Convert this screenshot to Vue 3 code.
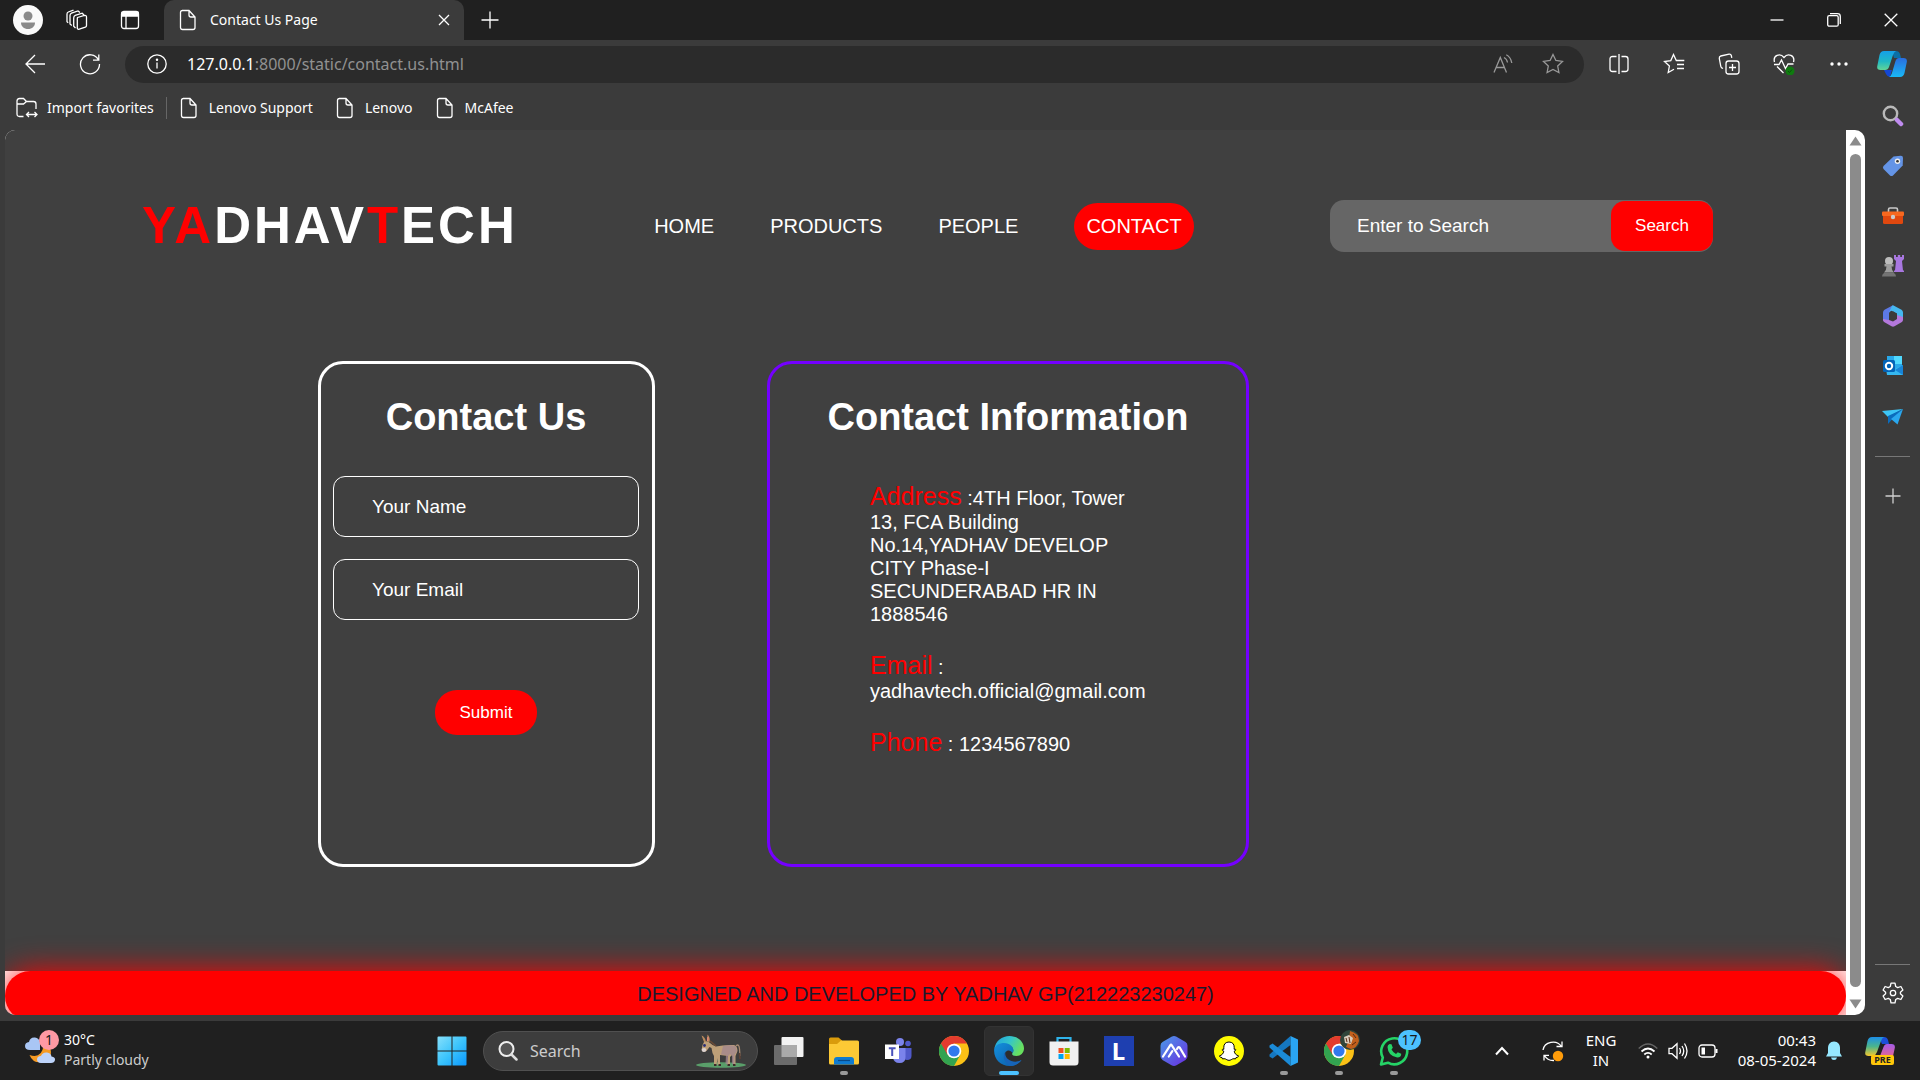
<script setup>
import { ref } from 'vue'

const name = ref('')
const email = ref('')
const query = ref('')
const taskQuery = ref('')

const bookmarks = ['Lenovo Support', 'Lenovo', 'McAfee']
const links = ['HOME', 'PRODUCTS', 'PEOPLE', 'CONTACT']
</script>

<template>
  <div class="desktop">
    <header class="tabstrip">
      <button class="profile" aria-label="Profile">
        <svg width="30" height="30" viewBox="0 0 30 30"><circle cx="15" cy="15" r="15" fill="#fafafa" /><circle cx="15" cy="11" r="4.5" fill="#8a8a8a" /><path d="M8 17.5h14c0 4-3 6.500-7 6.500s-7-2.500-7-6.500z" fill="#8a8a8a" /></svg>
      </button>
      <button class="icon tool" aria-label="Workspaces">
        <svg width="22" height="22" viewBox="0 0 22 22" class="line"><path d="M11.500 8.500l7-2q2-.4 2 1.500v8.500q0 1.200-1.200 1.700l-6 2q-2 .5-2-1.500v-8.500q0-1.200.2-1.700z" /><path d="M9.500 19l-1.800-1.800V9q0-2 1.500-2.600l7-2.200L18 6" /><path d="M5.800 16.500l-1.800-1.500V6.500q0-1.800 1.500-2.400l6.500-2.200 2 1.600M2.200 13.800l-1.200-1V5q0-1.500 1.300-2L7.500 1.200" /></svg>
      </button>
      <button class="icon tool" aria-label="Tab actions">
        <svg width="20" height="20" viewBox="0 0 20 20" class="line"><rect x="1.500" y="1.500" width="17" height="17" rx="2.500" /><path d="M2 2.500h16v3.500H2z" fill="#fff" /><path d="M6 6v12" /></svg>
      </button>
      <div class="tab">
        <svg width="18" height="22" viewBox="0 0 18 22" class="line"><path d="M3 1.500h7L16 8v10.500q0 2-2 2H3.500q-2 0-2-2V3.500q0-2 2-2zM10 1.500V6q0 2 2 2h4" /></svg>
        <span class="tab-title">Contact Us Page</span>
        <button class="icon" aria-label="Close tab"><svg width="12" height="12" viewBox="0 0 12 12" class="line"><path d="M1 1l10 10M11 1L1 11" /></svg></button>
      </div>
      <button class="icon newtab" aria-label="New tab"><svg width="18" height="18" viewBox="0 0 18 18" class="line"><path d="M9 .5v17M.5 9h17" /></svg></button>
      <div class="controls">
        <button class="icon" aria-label="Minimize"><svg width="14" height="14" viewBox="0 0 14 14" class="line"><path d="M.5 7h13" /></svg></button>
        <button class="icon" aria-label="Restore"><svg width="14" height="14" viewBox="0 0 14 14" class="line"><rect x=".7" y="2.700" width="10.500" height="10.500" rx="1.500" /><path d="M3 .7h7.500q2.800 0 2.800 2.800V11" /></svg></button>
        <button class="icon" aria-label="Close"><svg width="14" height="14" viewBox="0 0 14 14" class="line"><path d="M.7.7l12.600 12.600M13.300.7L.7 13.300" /></svg></button>
      </div>
    </header>

    <div class="toolbar">
      <button class="icon nav-btn" aria-label="Back"><svg width="20" height="20" viewBox="0 0 20 20" class="line"><path d="M20 10H1M10 1L1 10l9 9" /></svg></button>
      <button class="icon nav-btn" aria-label="Refresh"><svg width="22" height="22" viewBox="0 0 22 22" class="line"><path d="M19.500 7A9.500 9.500 0 1 0 20.500 11M19.800 1.500V7.200H14" /></svg></button>
      <div class="address">
        <svg width="20" height="20" viewBox="0 0 20 20" class="line"><circle cx="10" cy="10" r="9.200" /><path d="M10 8.500v6" /><circle cx="10" cy="5.800" r=".6" fill="#fff" /></svg>
        <a class="url" href="#">127.0.0.1<span>:8000/static/contact.us.html</span></a>
        <button class="icon addr-btn" aria-label="Read aloud"><svg width="20" height="20" viewBox="0 0 20 20" class="line dim"><path d="M1 18.500L7.300 3.500l6.200 15M3.200 13.500h8.200M11 3.500q3 1.500 3.500 5M13.300.8q4.500 2.400 5.500 8.200" /></svg></button>
        <button class="icon addr-btn" aria-label="Add to favorites"><svg width="22" height="22" viewBox="0 0 22 22" class="line dim"><path d="M11 1.500l2.900 6 6.600.9-4.800 4.600 1.200 6.500-5.900-3.100-5.900 3.100 1.200-6.500L1.500 8.400l6.600-.9z" /></svg></button>
      </div>
      <div class="actions">
        <button class="icon" aria-label="Split screen"><svg width="20" height="20" viewBox="0 0 20 20" class="line"><path d="M10 0v20M7.500 2.500H3.500q-2.500 0-2.500 2.500v10q0 2.500 2.500 2.500h4M12.500 2.500h4q2.500 0 2.500 2.500v10q0 2.500-2.500 2.500h-4" /></svg></button>
        <button class="icon" aria-label="Favorites"><svg width="22" height="22" viewBox="0 0 22 22" class="line"><path d="M11 16.300l-5.800 3.200 1.200-6.500L1.500 8.500l6.300-.9L10.500 1.500l2.800 6h8M14 11.500h7M14 15.500h7" /></svg></button>
        <button class="icon" aria-label="Collections"><svg width="22" height="22" viewBox="0 0 22 22" class="line"><rect x="8" y="8" width="13" height="13" rx="2.500" /><path d="M14.500 11v7M11 14.500h7M5 15.500l-1.200-.6q-.8-.5-1-1.500L1.300 5.500q-.3-2 1.500-2.500L11 1.200q1.800-.3 2.300 1.300l.5 2.300" /></svg></button>
        <button class="icon" aria-label="Browser essentials"><svg width="22" height="22" viewBox="0 0 22 22" class="line"><path d="M1.500 9C-.3 2.500 7-.5 11 4.500 15-.5 22.300 2.500 20.500 9M1 11.500h5l2.500-4.500 4 8.500 2.500-4.500h5.500M4 13.500l6.500 6.500" /><circle cx="17" cy="18" r="4.500" fill="#0f7b0f" stroke="none" /><path d="M15 18l1.500 1.500L19 16.500" stroke="#0a500a" stroke-width="1" /></svg></button>
        <button class="icon" aria-label="Settings and more"><svg width="18" height="6" viewBox="0 0 18 6" fill="#fff"><circle cx="2" cy="3" r="1.700" /><circle cx="9" cy="3" r="1.700" /><circle cx="16" cy="3" r="1.700" /></svg></button>
      </div>
      <button class="icon copilot" aria-label="Copilot">
        <svg width="30" height="28" viewBox="0 0 30 28">
          <defs>
            <linearGradient id="cpa" x1="0" y1="0" x2="0" y2="1"><stop offset="0" stop-color="#159fe8" /><stop offset=".55" stop-color="#20b8c4" /><stop offset="1" stop-color="#62d596" /></linearGradient>
            <linearGradient id="cpb" x1="0" y1="0" x2="0" y2="1"><stop offset="0" stop-color="#2a6ddf" /><stop offset="1" stop-color="#19b9f7" /></linearGradient>
          </defs>
          <path d="M15 1h4q3 0 4 3l1 4h-7z" fill="#0b6fa5" />
          <path d="M7 20h8l-2 7q-3-.5-4-3z" fill="#1447d4" />
          <path d="M7 1h12q-2 1-3 4l-4 12q-1 3-4 3H3.500Q-.5 20 .3 16L2.500 5q1-4 4.500-4z" fill="url(#cpa)" />
          <path d="M22 8h4.500q4 0 3.300 4L27.500 23q-1 4-4.500 4H12q2-1 2.800-3.500L18.500 11q1-3 3.500-3z" fill="url(#cpb)" />
        </svg>
      </button>
    </div>

    <nav class="bookmarks" aria-label="Favorites bar">
      <a href="#" class="import">
        <svg width="22" height="22" viewBox="0 0 22 22" class="line"><path d="M7.500 19.500H3.500q-2.500 0-2.500-2.500V4q0-2.500 2.500-2.500h4l3 3h7q2.500 0 2.500 2.500v5M1 7h6.500l3-2.500M11 17.500h9.500M13 15l-2.500 2.500L13 20M18.500 15l2.500 2.500-2.500 2.500" /></svg>
        Import favorites
      </a>
      <a v-for="b in bookmarks" :key="b" href="#">
        <svg width="18" height="22" viewBox="0 0 18 22" class="line"><path d="M3 1.500h7L16 8v10.500q0 2-2 2H3.500q-2 0-2-2V3.500q0-2 2-2zM10 1.500V6q0 2 2 2h4" /></svg>
        {{ b }}
      </a>
    </nav>

    <div class="browser">
      <div class="page">
        <div class="site">
          <header class="site-head">
            <div class="logo"><span>YA</span>DHAV<span>T</span>ECH</div>
            <nav class="menu">
              <a v-for="l in links" :key="l" href="#" :class="{ active: l === 'CONTACT' }">{{ l }}</a>
            </nav>
            <form class="search" @submit.prevent>
              <input v-model="query" type="text" placeholder="Enter to Search" aria-label="Enter to Search" />
              <button>Search</button>
            </form>
          </header>
          <main class="cards">
            <form class="card contact" @submit.prevent>
              <h1>Contact Us</h1>
              <input v-model="name" type="text" placeholder="Your Name" aria-label="Your Name" />
              <input v-model="email" type="email" placeholder="Your Email" aria-label="Your Email" />
              <button>Submit</button>
            </form>
            <section class="card info">
              <h1>Contact Information</h1>
              <div class="details">
                <p><span>Address</span> :4TH Floor, Tower 13, FCA Building No.14,YADHAV DEVELOP CITY Phase-I SECUNDERABAD HR IN 1888546</p>
                <p><span>Email</span> : yadhavtech.official@gmail.com</p>
                <p><span>Phone</span> : 1234567890</p>
              </div>
            </section>
          </main>
        </div>
        <footer class="site-foot">DESIGNED AND DEVELOPED BY YADHAV GP(212223230247)</footer>
      </div>
      <div class="scrollbar">
        <svg width="13" height="10" viewBox="0 0 13 10"><path d="M6.500 0.500L12.500 9.500H.5z" fill="#8b8b8b" /></svg>
        <div class="thumb"></div>
        <svg width="13" height="10" viewBox="0 0 13 10"><path d="M6.500 9.500L.5.5h12z" fill="#8b8b8b" /></svg>
      </div>
    </div>

    <aside class="sidebar">
      <button class="icon" aria-label="Search"><svg width="22" height="22" viewBox="0 0 22 22"><circle cx="8.500" cy="8.500" r="6.700" fill="none" stroke="#b9b9b9" stroke-width="2.400" /><path d="M15 15l4 4" stroke="#c08cf0" stroke-width="4.500" stroke-linecap="round" /></svg></button>
      <button class="icon" aria-label="Shopping"><svg width="22" height="22" viewBox="0 0 22 22"><path d="M11.500 1.500L18.500.8q2.500-.2 2.500 2.200l-.3 7.500L11 20.500q-1.500 1.200-3 0l-6.500-6.500q-1.200-1.500 0-3z" fill="#6494e6" /><circle cx="15.500" cy="6.300" r="2.700" fill="#eee" /><circle cx="15.500" cy="6.300" r="1.300" fill="#333" /></svg></button>
      <button class="icon" aria-label="Tools"><svg width="22" height="22" viewBox="0 0 22 22"><path d="M6.500 7V4.500q0-1.500 1.500-1.500h6q1.500 0 1.500 1.500V7" fill="none" stroke="#c9c9c9" stroke-width="1.600" /><rect x="1" y="9" width="20" height="10" rx="1.500" fill="#e0480f" /><rect x="0" y="6.500" width="22" height="4.500" rx="1" fill="#f7681f" /><circle cx="11" cy="12" r="2.200" fill="#ccc" /></svg></button>
      <button class="icon" aria-label="Games"><svg width="22" height="22" viewBox="0 0 22 22"><path d="M12 0h2v2h1.800V0h2.400v2H20V0h2v4l-2 2 1 9.500h1V17H12v-1.500h1L14 6l-2-2z" fill="#a877e0" /><circle cx="7" cy="6" r="4" fill="#bdbdbd" /><path d="M2.500 9h9v2.500H9.500Q9.500 15 12 17.500H2Q4.500 15 4.500 11.500h-2z" fill="#9d9d9d" /><path d="M2 18h10q2 1 2 3.500H0Q0 19 2 18z" fill="#747474" /></svg></button>
      <button class="icon" aria-label="Microsoft 365">
        <svg width="22" height="22" viewBox="0 0 22 22">
          <path d="M11 .3L2.500 4.800Q1 5.700 1 7.500v8l6 2.500V8.500q0-1.500 1.500-2.300L14 3z" fill="#5c79e6" />
          <path d="M10 .8q1-.6 2 0l7.500 4Q21 5.700 21 7.500V14l-6-3.500V8.800L9 5.500 7 7.500Z" fill="#45b8f0" />
          <path d="M21 12v3q0 1.500-1.500 2.300l-7 4q-1.500.8-3 0L2.500 17.300Q1 16.500 1 15v-1l6 1 4 1.500 4-2.500v-4z" fill="#b478dc" />
          <path d="M7 8.500l4-2.300 4 2.300v4.700l-4 2.500-4-2.500z" fill="#3b3b3b" />
        </svg>
      </button>
      <button class="icon" aria-label="Outlook"><svg width="22" height="22" viewBox="0 0 22 22"><path d="M5 1h15v19H5z" fill="#28a8ea" /><path d="M12 1h8v8h-8z" fill="#50d9ff" /><path d="M4 14l9 0 8-4v10H5z" fill="#35b8f1" /><path d="M13 15l8-5v10z" fill="#1784d8" /><rect x="1" y="5" width="12" height="12" rx="1.500" fill="#0364b8" /><circle cx="7" cy="11" r="3.200" fill="none" stroke="#fff" stroke-width="2" /></svg></button>
      <button class="icon" aria-label="Drop"><svg width="22" height="22" viewBox="0 0 22 22"><path d="M0 6L21 4 6 12z" fill="#3dc5f5" /><path d="M21 4L6 11v8l4-4.500z" fill="#0b6cbd" /><path d="M21 4L9 14l6.500 5.500z" fill="#2aa7ee" /></svg></button>
      <hr />
      <button class="icon plus" aria-label="Customize"><svg width="16" height="16" viewBox="0 0 16 16" class="line"><path d="M8 .5v15M.5 8h15" stroke="#d0d0d0" /></svg></button>
      <hr class="push" />
      <button class="icon gear" aria-label="Settings"><svg width="22" height="22" viewBox="0 0 22 22" class="line"><path d="M9 1.200h4l.7 3.300 2 1.100 3.200-1.100 2 3.500-2.500 2.200v1.600l2.500 2.200-2 3.500-3.200-1.100-2 1.100-.7 3.300H9l-.7-3.300-2-1.100-3.200 1.100-2-3.500 2.500-2.200v-1.600L1.100 8l2-3.500 3.200 1.100 2-1.100z" stroke-linejoin="round" /><circle cx="11" cy="11" r="2.700" /></svg></button>
    </aside>

    <footer class="taskbar">
      <div class="weather">
        <svg width="32" height="36" viewBox="0 0 32 36">
          <path d="M24 13q6 13-6 17-10 2-13.500-7 12 4 14-9z" fill="#f59a23" />
          <path d="M5 18q-5 0-5-4 0-3.500 4-4Q5 5 10 5.500q4 .5 5 4.500V18z" fill="#a9c6f5" />
          <path d="M16 31q-4-.3-4-3.500t4-3.500q1.500-4 6-3.500 4 .5 4.500 4 4 .5 3.500 3.500-.5 3-4 3z" fill="#bdd3fa" />
        </svg>
        <span class="badge pink">1</span>
        <div><b>30°C</b><span>Partly cloudy</span></div>
      </div>
      <div class="apps">
        <button class="icon app" aria-label="Start"><svg width="30" height="30" viewBox="0 0 30 30"><defs><linearGradient id="win" x1="0" y1="0" x2="1" y2="1"><stop offset="0" stop-color="#86e0fb" /><stop offset=".5" stop-color="#3cc4fc" /><stop offset="1" stop-color="#0a98ff" /></linearGradient></defs><path d="M.5 1.500q0-1 1-1h13v14H.5zM15.500.5h13q1 0 1 1v13h-14zM.5 15.500h14v14h-13q-1 0-1-1zM15.500 15.500h14v13q0 1-1 1h-13z" fill="url(#win)" /></svg></button>
        <label class="task-search">
          <svg width="20" height="22" viewBox="0 0 20 22"><circle cx="8.500" cy="9" r="7" fill="#555" stroke="#eee" stroke-width="2" /><path d="M13.500 14.500l5 5" stroke="#ddd" stroke-width="2.500" stroke-linecap="round" /></svg>
          <input v-model="taskQuery" type="text" placeholder="Search" aria-label="Search" />
          <svg width="50" height="34" viewBox="0 0 50 34">
            <ellipse cx="25" cy="31" rx="25" ry="2.800" fill="#5a9e6a" />
            <path d="M8 8q3-2 6 1 3 3 6 3.500 8-2 18-1.500 3.500 1 3.500 6l-2 5v9h-2.500v-8l-1-2-2 2v8h-3l1-9-8-1v10h-2.500v-7l-1 7H18v-9q-2-3-2.500-8l-2-1-3 4-3 1-2-2 1-5z" fill="#bd9f78" />
            <path d="M27 12q7-1.500 12.500 0l1.500 5-2.500 4v9h-2.500v-8l-2-2-2 2v8h-2.500l.5-9-5-.5z" fill="#a2868f" opacity=".75" />
            <path d="M8 8L5.500 1.500Q9 2.500 10 8zM11 7.500L11.500.5q3 3 2 7.500z" fill="#b98b5e" /><path d="M11.500 7l.5-4" stroke="#e8897c" stroke-width="1.200" />
            <path d="M14 7l6 5" stroke="#6b4b35" stroke-width="1.600" />
            <path d="M40 12q3-3 3.500 3l.5 7" stroke="#a68a72" stroke-width="1.300" fill="none" /><path d="M43.500 19l.5 6" stroke="#5a4136" stroke-width="1.800" />
            <circle cx="8.500" cy="11.500" r="1.400" fill="#2b3078" /><ellipse cx="8" cy="16" rx="2.300" ry="2" fill="#dcd2d0" />
            <path d="M18 31h2.500M22.500 31H25M31.500 31H34M37 31h2.500" stroke="#3c2a2a" stroke-width="2" />
          </svg>
        </label>
        <button class="icon app" aria-label="Task view"><svg width="30" height="30" viewBox="0 0 30 30"><rect x="7.500" y="1" width="22" height="20" rx="1" fill="#f2f2f2" /><rect x="0" y="9" width="23" height="20" rx="1" fill="#6b6b6b" /><path d="M7.500 9H23v12H7.500z" fill="#aaa" /></svg></button>
        <button class="icon app run" aria-label="File Explorer"><svg width="30" height="28" viewBox="0 0 30 28"><path d="M0 2q0-1.500 1.500-1.500h8L13 3.500V8H0z" fill="#d99b0b" /><path d="M0 7h8l4-3.500h16.500Q30 3.500 30 5v21q0 1.500-1.500 1.500h-27Q0 27.500 0 26z" fill="#fcc935" /><path d="M5 27.500V23q0-3 3-3h14q3 0 3 3v4.500z" fill="#0f7bd0" /><path d="M9 23.500h12" stroke="#084a88" stroke-width="1.200" /></svg></button>
        <button class="icon app" aria-label="Teams"><svg width="28" height="28" viewBox="0 0 28 28"><circle cx="15" cy="5" r="4" fill="#7b83eb" /><circle cx="23" cy="6.500" r="2.800" fill="#5059c9" /><path d="M18 11h8.500v8q0 4-4.500 4-3 0-4-2z" fill="#5059c9" /><path d="M8 11h12.500v9q0 6-6 6T8 20z" fill="#7b83eb" /><rect x="0" y="7.500" width="14" height="14.500" fill="#fff" /><path d="M3.800 11.300h6.800M7.200 11v8" stroke="#4b53bc" stroke-width="2" /></svg></button>
        <button class="icon app" aria-label="Chrome">
          <svg width="30" height="30" viewBox="0 0 30 30"><g id="chrome"><circle cx="15" cy="15" r="15" fill="#fbc116" /><path d="M15 15L2 7.500A15 15 0 0 0 15 30l6.500-11.500z" fill="#32a350" /><path d="M2 7.500A15 15 0 0 1 28 7.500H15L8.500 18.800z" fill="#e33b2e" /><circle cx="15" cy="15" r="7.300" fill="#fff" /><circle cx="15" cy="15" r="5.600" fill="#3079ee" /></g></svg>
        </button>
        <button class="icon app current" aria-label="Edge">
          <svg width="30" height="30" viewBox="0 0 30 30">
            <defs><linearGradient id="ea" x1="0" y1="0" x2="1" y2=".4"><stop offset="0" stop-color="#1e9fe0" /><stop offset=".55" stop-color="#35c6c9" /><stop offset="1" stop-color="#68e05f" /></linearGradient><linearGradient id="eb" x1="0" y1="0" x2="1" y2="1"><stop offset="0" stop-color="#1490dd" /><stop offset="1" stop-color="#0c59a4" /></linearGradient></defs>
            <path d="M.3 13C1.500 5 8 0 15.500 0 24 0 30 6 30 12.500 30 17 26.500 20 22.500 20c-4 0-5-1.500-4-3 2-3 0-7.500-5-7.500C7 9.500 1 11 .3 13z" fill="url(#ea)" />
            <path d="M.2 13C1.500 9 5.500 7 10 7c6 0 9.500 4 9.500 7.500 0 1.200-.4 2-1 2.500-1.500-3-5-3.500-7-1-3 4 1 10.500 8 10.500 3 0 5.500-1 8-2.500C25 27.500 20.500 30 15.500 30 6.500 30-.8 22.500.2 13z" fill="url(#eb)" />
            <path d="M11.500 16c-4 5-.5 11.500 5 13.900 4.500 0 8.500-2.400 11-5.900-8 4.500-18-1-16-8z" fill="#1664b8" />
          </svg>
        </button>
        <button class="icon app" aria-label="Microsoft Store"><svg width="30" height="30" viewBox="0 0 30 30"><path d="M8.500 6V2h13v4" fill="none" stroke="#2fb3ea" stroke-width="2.200" /><path d="M.5 5.500h29V26q0 3.500-3.500 3.500H4Q.5 29.500.5 26z" fill="#f1f1f1" /><path d="M9.500 12h5v5h-5z" fill="#f25022" /><path d="M15.700 12h5v5h-5z" fill="#7fba00" /><path d="M9.500 18h5v5h-5z" fill="#00a4ef" /><path d="M15.700 18h5v5h-5z" fill="#ffb900" /></svg></button>
        <button class="icon app" aria-label="Lenovo Vantage"><span class="lapp">L</span></button>
        <button class="icon app" aria-label="MSI"><svg width="30" height="30" viewBox="0 0 30 30"><defs><linearGradient id="ma" x1="0" y1="0" x2="1" y2="1"><stop offset="0" stop-color="#4a9be8" /><stop offset="1" stop-color="#6a2be0" /></linearGradient></defs><path d="M12.500.7q2.500-1.200 5 0l9 5.300q2 1.200 2 3.700v10.600q0 2.500-2 3.700l-9 5.300q-2.500 1.200-5 0l-9-5.300q-2-1.200-2-3.700V9.700q0-2.500 2-3.700z" fill="url(#ma)" /><path d="M4 20.500L11.200 9.300q.8-1.200 1.600 0L20 20.500M9.800 20.500l3.500-5.300M18 13l1-1.500q.8-1 1.600 0L26 20.500" fill="none" stroke="#fff" stroke-width="2.200" stroke-linecap="round" /></svg></button>
        <button class="icon app" aria-label="Snapchat"><svg width="30" height="30" viewBox="0 0 30 30"><circle cx="15" cy="15" r="15" fill="#fffc00" /><path d="M15 6c3.500 0 5.300 2.300 5.200 5.300v2q1.500-.5 1.600.5 0 .8-1.600 1.400c.5 2.500 2 4 4.300 4.600.2 1.200-1.300 1.500-2.500 1.800l-.5 1.300c-2.500-.6-3.500.3-4.500 1q-2 1-4 0c-1-.7-2-1.600-4.500-1L8 21.600c-1.200-.3-2.700-.6-2.500-1.800 2.300-.6 3.800-2.100 4.300-4.600-1.600-.6-1.700-1-1.600-1.400q.2-1 1.600-.5v-2C9.700 8.300 11.500 6 15 6z" fill="#fff" stroke="#000" stroke-width="1" /></svg></button>
        <button class="icon app run" aria-label="Visual Studio Code"><svg width="30" height="30" viewBox="0 0 30 30"><path d="M21.500 0v9L3.500 22.500.5 20.500v-2z" fill="#1577c0" /><path d="M21.500 30v-9L3.500 7.500l-3 2v2z" fill="#1b8bd8" /><path d="M21.500 0L29 3.500v23L21.500 30z" fill="#2aa5f3" /></svg></button>
        <button class="icon app run" aria-label="Chrome profile">
          <svg width="30" height="30" viewBox="0 0 30 30"><use href="#chrome" /></svg>
          <svg class="avatar" width="20" height="20" viewBox="0 0 20 20"><circle cx="10" cy="10" r="10" fill="#30453a" /><path d="M10 1q9 2 9 10-2 7-8 8l-5-2 3-7z" fill="#c2601c" /><path d="M4 7l5-2 4 3-2 6-6-1z" fill="#d9cdbd" /><path d="M6 8l1 4M9 7l1 6M13 4l3 4M12 15l4-3" stroke="#5a2a12" /></svg>
        </button>
        <button class="icon app run" aria-label="WhatsApp">
          <svg width="30" height="30" viewBox="0 0 30 30"><path d="M2 28.500l1.800-7A13 13 0 1 1 9 26.700z" fill="none" stroke="#25d366" stroke-width="2.600" stroke-linejoin="round" /><path d="M10.500 8l2 .3 1.300 3.500-1.300 1.800q1.500 3 4.500 4.300l1.800-1.700 3.400 1.600q.3 3.700-4 3.700Q9 20 8.500 11q0-2 2-3z" fill="#25d366" /></svg>
          <span class="badge blue">17</span>
        </button>
      </div>
      <div class="tray">
        <svg width="16" height="10" viewBox="0 0 16 10" class="line"><path d="M2 8.500l6-6.500 6 6.500" stroke-width="2" /></svg>
        <svg width="22" height="22" viewBox="0 0 22 22" class="line"><path d="M1 10A10 9 0 0 1 19.500 6.500M20 1.500V6.500h-5.500M12 20.500A10 9 0 0 1 2.500 15.500M2 20.500V15.300h5" /><circle cx="16" cy="16" r="5.200" fill="#ff9c0a" stroke="none" /></svg>
        <div class="lang"><span>ENG</span><span>IN</span></div>
        <div class="status">
          <svg width="20" height="16" viewBox="0 0 20 16" class="line"><path d="M.7 5.500Q10-3.500 19.300 5.500" stroke="#666" /><path d="M3.500 8.500q6.500-6 13 0M6.300 11.500q3.700-3.300 7.400 0" stroke-width="1.800" /><circle cx="10" cy="14" r="1.500" fill="#fff" stroke="none" /></svg>
          <svg width="20" height="18" viewBox="0 0 20 18" class="line"><path d="M1 6.300h3L9 1.800v14.400l-5-4.500H1zM11.500 6q2 3 0 6M14 4q3.500 5 0 10M16.500 1.500q5 7.500 0 15" /></svg>
          <svg width="20" height="14" viewBox="0 0 20 14" class="line"><rect x="1" y="1" width="16" height="12" rx="3" /><path d="M18.500 5v4" stroke-width="2" /><path d="M3.500 3.500H7v7H3.500z" fill="#fff" stroke="none" /></svg>
        </div>
        <div class="clock"><span>00:43</span><span>08-05-2024</span></div>
        <svg width="16" height="20" viewBox="0 0 16 20" fill="#96e8ff"><path d="M8 .5c4 0 6 3 6 6.500V12l2 3.500H0L2 12V7C2 3.500 4 .5 8 .5zM5 16.500h6q-.5 2.500-3 2.500t-3-2.500z" /></svg>
        <div class="pre">
          <svg width="30" height="28" viewBox="0 0 30 28">
            <defs>
              <linearGradient id="pa" x1="0" y1="0" x2="0" y2="1"><stop offset="0" stop-color="#1d8fe8" /><stop offset=".5" stop-color="#4bb58c" /><stop offset="1" stop-color="#f5c72c" /></linearGradient>
              <linearGradient id="pb" x1="0" y1="0" x2="0" y2="1"><stop offset="0" stop-color="#a45be8" /><stop offset="1" stop-color="#f2667e" /></linearGradient>
            </defs>
            <path d="M14 0h5q3 0 4 3l1 4h-7z" fill="#1c4fd8" />
            <path d="M7 0h12q-2 1-3 4l-4 11q-1 3-4 4H3.500Q-.5 19 .3 15L2.500 4q1-4 4.500-4z" fill="url(#pa)" />
            <path d="M22 7h4.500q4 0 3.300 4l-2 9q-1 3-4.500 3H12q2-1 2.800-3.500L18.500 10q1-3 3.500-3z" fill="url(#pb)" />
          </svg>
          <span>PRE</span>
        </div>
      </div>
    </footer>
  </div>
</template>

<style>
body { margin: 0; background: #202020; }
</style>

<style scoped>
* { box-sizing: border-box; }
.desktop {
  display: grid;
  grid-template-columns: 1fr 55px;
  grid-template-rows: 40px 48px 42px 1fr 59px;
  min-height: 100vh;
  background: #3b3b3b;
  color: #fff;
  font-family: "Noto Sans", "Open Sans", sans-serif;
  font-size: 14px;
}
button { border: 0; padding: 0; background: none; color: inherit; font-family: inherit; }
a { color: inherit; text-decoration: none; }
svg { display: block; flex: none; }
.icon { display: flex; align-items: center; justify-content: center; flex: none; }
.line { fill: none; stroke: #fff; stroke-width: 1.3; }
.dim { stroke: #999; }

.tabstrip { grid-column: 1 / -1; display: flex; align-items: center; padding-right: 1px; background: #202020; }
.profile { margin-left: 13px; margin-right: 7px; }
.tool { width: 53px; }
.tab {
  display: flex; align-items: center; gap: 13px;
  width: 300px; height: 40px; margin-left: 8px; padding: 0 14px 0 15px;
  border-radius: 10px 10px 0 0; background: #3b3b3b;
}
.tab-title { flex: 1; padding-bottom: 2px; }
.newtab { width: 52px; }
.controls { display: flex; margin-left: auto; }
.controls .icon { width: 57px; }

.toolbar { grid-column: 1 / -1; display: flex; align-items: center; padding: 0 2px 0 7px; }
.nav-btn { width: 55px; }
.address {
  flex: 1; display: flex; align-items: center;
  height: 37px; margin: 0 7px 0 8px; padding: 0 6px 0 22px;
  border-radius: 19px; background: #2b2b2b;
}
.url { flex: 1; margin-left: 20px; font-size: 16px; }
.url span { color: #919191; }
.addr-btn { width: 50px; }
.actions { display: flex; }
.actions .icon { width: 55px; }
.copilot { width: 52px; }

.bookmarks { grid-column: 1 / -1; display: flex; align-items: center; gap: 23px; padding: 0 16px 3px; }
.bookmarks a { display: flex; align-items: center; gap: 11px; }
.bookmarks .import { gap: 9px; padding-right: 12px; margin-right: -10px; border-right: 1px solid #666; }

.browser {
  display: flex; margin: 0 0 6px 5px;
  border-radius: 10px; overflow: hidden;
}
.page {
  flex: 1; display: flex; flex-direction: column; overflow: hidden;
  background: #fff; font-family: "Liberation Sans", Arial, sans-serif; font-size: 20px;
}
.site { flex: 1; padding: 70px 133px 100px 137px; background: #404040; }
.site-head { display: flex; align-items: center; justify-content: space-between; }
.logo { font-size: 51px; line-height: 52px; font-weight: 700; letter-spacing: 3px; }
.logo span { color: #f00; }
.menu { display: flex; align-items: center; gap: 56px; }
.menu .active { padding: 12px; border-radius: 24px; background: #f00; }
.search { display: flex; width: 383px; height: 52px; border-radius: 14px; background: #666; }
input { border: 0; outline: 0; background: none; color: #fff; font-family: inherit; }
input::placeholder { color: #fff; opacity: 1; }
.search input { flex: 1; min-width: 0; padding: 0 27px; font-size: 19px; }
.search button { width: 102px; margin: 1px 0; border-radius: 14px; background: #f00; font-size: 17px; }

.cards { display: flex; gap: 112px; margin-top: 109px; padding-left: 176px; }
.card { min-height: 506px; border: 3px solid #fff; border-radius: 25px; }
.card h1 { margin: 32px 0 0; font-size: 38px; line-height: 42px; text-align: center; }
.contact { display: flex; flex-direction: column; width: 337px; padding: 0 13px 0 12px; }
.contact input { height: 61px; margin-top: 22px; padding: 0 38px; border: 1px solid #fff; border-radius: 12px; font-size: 19px; }
.contact h1 + input { margin-top: 38px; }
.contact button { align-self: center; width: 102px; height: 45px; margin-top: 70px; border-radius: 22px; background: #f00; font-size: 17px; }
.info { width: 482px; border-color: #7400ff; }
.details { width: 284px; margin: 44px 0 0 100px; line-height: 23px; }
.details p { margin: 0 0 25px; }
.details span { color: #f00; font-size: 25px; line-height: 29px; }
.site-foot {
  position: relative; height: 50px; margin-bottom: -6px;
  border-radius: 25px; background: #f00; box-shadow: 0 0 30px #f00;
  color: #1a1a2e; line-height: 46px; text-align: center;
}

.scrollbar {
  display: flex; flex-direction: column; align-items: center; gap: 8px;
  width: 19px; padding: 6px 0; background: #fff;
}
.thumb { flex: 1; width: 11px; margin-bottom: 4px; border-radius: 6px; background: #8b8b8b; }

.sidebar { display: flex; flex-direction: column; align-items: center; margin-top: -39px; }
.sidebar .icon { width: 55px; height: 50px; }
.sidebar hr { width: 35px; margin: 15px 0; border: 0; border-top: 1px solid #777; }
.sidebar .plus { height: 48px; }
.sidebar .push { margin: auto 0 0; }
.sidebar .gear { height: 56px; }

.taskbar {
  grid-column: 1 / -1; display: grid; grid-template-columns: 424px 1fr auto; align-items: center;
  background: #202020;
}
.weather { position: relative; display: flex; align-items: center; gap: 7px; padding: 0 0 2px 25px; line-height: 20px; }
.weather b, .weather div span, .lang span, .clock span { display: block; font-weight: 400; }
.weather div span { color: #ccc; }
.badge { position: absolute; display: flex; align-items: center; justify-content: center; color: #1a1a1a; font-size: 14px; line-height: 14px; }
.pink { left: 39px; top: 0; width: 20px; height: 20px; border-radius: 10px; background: #ff99a4; }
.blue { left: 32px; top: 4px; width: 23px; height: 20px; border-radius: 10px; background: #4cc2ff; }
.apps { display: flex; align-items: center; }
.app { position: relative; width: 55px; height: 50px; }
.run::after, .current::after {
  content: ""; position: absolute; bottom: 1px; width: 8px; height: 4px; border-radius: 2px; background: #9a9a9a;
}
.current { width: 50px; margin: 0 2px 0 3px; border: 1px solid #333; border-radius: 6px; background: #2d2d2d; }
.current::after { width: 20px; background: #4cc2ff; bottom: 0; }
.avatar { position: absolute; left: 29px; top: 4px; }
.lapp { width: 30px; height: 30px; background: #1e3fb0; font: 700 24px/30px "Noto Sans", sans-serif; }
.task-search {
  display: flex; align-items: center; gap: 12px;
  width: 275px; height: 40px; margin: 0 3px 0 4px; padding: 0 11px 0 14px;
  border: 1px solid #505050; border-radius: 20px; background: #3d3d3d;
}
.task-search input { flex: 1; min-width: 0; padding: 0; font-size: 16px; }
.task-search input::placeholder { color: #ccc; }
.tray { display: flex; align-items: center; line-height: 20px; padding-right: 25px; font-size: 15px; }
.tray > svg:first-child { margin-right: 32px; }
.lang, .clock { padding-bottom: 2px; }
.lang { width: 38px; margin: 0 18px; text-align: center; }
.status { display: flex; align-items: center; gap: 10px; }
.clock { width: 80px; margin: 0 10px 0 18px; text-align: right; }
.pre { position: relative; width: 30px; margin-left: 23px; }
.pre span {
  position: absolute; left: 6px; top: 18px; width: 23px; height: 10px; border-radius: 2px;
  background: #ffc60a; color: #222; font-size: 9px; line-height: 10px; font-weight: 700; text-align: center;
}
</style>
